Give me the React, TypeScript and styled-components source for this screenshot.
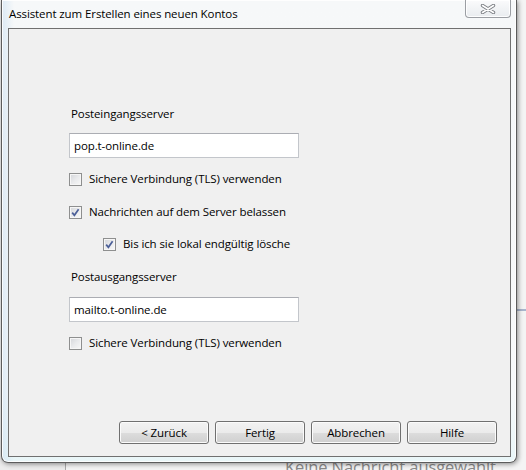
import React from "react";
import styled, { createGlobalStyle } from "styled-components";

const Global = createGlobalStyle`
  html, body { margin: 0; padding: 0; background: #f3f3f3; }
  body { font-family: "Open Sans", "Noto Sans", sans-serif; }
`;

const Desktop = styled.div`
  position: relative;
  width: 526px;
  height: 470px;
  overflow: hidden;
  background: #f4f4f4;
`;

const BackPaneLeft = styled.div`
  position: absolute;
  left: 0;
  top: 440px;
  width: 65px;
  height: 30px;
  background: #ececec;
  border-right: 1px solid #a9a9a9;
`;

const BackLine = styled.div`
  position: absolute;
  left: 510px;
  top: 309px;
  width: 16px;
  height: 2px;
  background: #a9b5cd;
`;

const BackText = styled.div`
  position: absolute;
  left: 285px;
  top: 459px;
  font-size: 16.5px;
  line-height: 16.5px;
  color: #8a8a8a;
  white-space: nowrap;
  letter-spacing: -0.1px;
`;

const Window = styled.div`
  position: relative;
  z-index: 1;
  margin-left: 1px;
  width: 516px;
  height: 463px;
  box-sizing: border-box;
  display: flex;
  flex-direction: column;
  border: 1px solid #5c5c5c;
  border-top: none;
  border-radius: 0 0 7px 7px;
  background:
    linear-gradient(90deg, rgba(200, 222, 240, 0.55) 0px, rgba(255, 255, 255, 0) 12px),
    linear-gradient(180deg, #f6f8f9 0%, #f7f9fa 85%, #e9f6f8 100%);
  box-shadow: inset 0 0 0 1px rgba(255, 255, 255, 0.85), 1px 1px 5px rgba(0, 0, 0, 0.45);
`;

const TitleBar = styled.div`
  height: 28px;
  flex: none;
  display: flex;
  align-items: flex-start;
  padding: 0 5px 0 7px;
`;

const Title = styled.div`
  font-size: 11.5px;
  line-height: 15px;
  letter-spacing: -0.1px;
  color: #000;
  margin-top: 6px;
  white-space: nowrap;
`;

const CloseButton = styled.div`
  margin-left: auto;
  width: 46px;
  height: 18px;
  box-sizing: border-box;
  border: 1px solid #9b9ea3;
  border-top: none;
  border-radius: 0 0 4px 4px;
  background: linear-gradient(180deg, #fbfbfc 0%, #f1f3f5 55%, #e9ecef 100%);
  box-shadow: inset 0 0 0 1px rgba(255, 255, 255, 0.9);
  display: flex;
  align-items: center;
  justify-content: center;
`;

const Panel = styled.div`
  flex: 1;
  margin: 0 5px 5px 6px;
  border: 1px solid #707070;
  background: #f0f0f0;
  display: flex;
  flex-direction: column;
  font-size: 11.5px;
  letter-spacing: -0.1px;
  color: #000;
`;

const Form = styled.div`
  display: flex;
  flex-direction: column;
  align-items: flex-start;
  padding: 77px 0 0 60px;
`;

const Label = styled.div<{ $mt: number }>`
  margin: ${(p) => p.$mt}px 0 0 2px;
  line-height: 15px;
  white-space: nowrap;
`;

const TextBox = styled.div<{ $mt: number }>`
  margin-top: ${(p) => p.$mt}px;
  width: 230px;
  height: 25px;
  box-sizing: border-box;
  border: 1px solid #c3c6cb;
  border-top-color: #abadb3;
  background: #fff;
  display: flex;
  align-items: center;
  padding-left: 4px;
  line-height: 15px;
  white-space: nowrap;
`;

const Row = styled.div<{ $mt: number; $indent?: number }>`
  margin-top: ${(p) => p.$mt}px;
  margin-left: ${(p) => p.$indent ?? 0}px;
  display: flex;
  align-items: flex-start;
`;

const Box = styled.span`
  width: 13px;
  height: 13px;
  box-sizing: border-box;
  flex: none;
  border: 1px solid #8e8f8f;
  background: linear-gradient(135deg, #d3d5d9 0%, #e9eaec 50%, #f8f8f8 100%);
  box-shadow: inset 0 0 0 1px #f6f6f6;
  display: flex;
  align-items: center;
  justify-content: center;
`;

const RowText = styled.span`
  margin: -2px 0 0 7px;
  line-height: 15px;
  white-space: nowrap;
`;

const ButtonBar = styled.div`
  margin-top: auto;
  display: flex;
  justify-content: flex-end;
  gap: 6px;
  padding: 0 13px 12px 0;
`;

const Button = styled.div`
  width: 90px;
  height: 23px;
  box-sizing: border-box;
  border: 1px solid #707070;
  border-radius: 3px;
  background: linear-gradient(180deg, #f2f2f2 0%, #ebebeb 50%, #dddddd 51%, #cfcfcf 100%);
  box-shadow: inset 0 0 0 1px #fbfbfb;
  display: flex;
  align-items: center;
  justify-content: center;
  line-height: 15px;
  white-space: nowrap;
`;

const CheckMark = () => (
  <svg width="11" height="11" viewBox="0 0 11 11">
    <path d="M2.2 5.6 L4.4 8.3 L8.6 2.2" fill="none" stroke="#4b5f98" strokeWidth="1.7" />
  </svg>
);

const CloseGlyph = () => (
  <svg width="16" height="10" viewBox="0 0 16 10">
    <path d="M2.5 1.5 L13.5 8.5 M13.5 1.5 L2.5 8.5" stroke="#7b7e83" strokeWidth="3.4" strokeLinecap="round" />
    <path d="M2.5 1.5 L13.5 8.5 M13.5 1.5 L2.5 8.5" stroke="#ffffff" strokeWidth="1.6" strokeLinecap="round" />
  </svg>
);

const Check: React.FC<{ checked?: boolean; label: string; mt: number; indent?: number }> = ({
  checked,
  label,
  mt,
  indent,
}) => (
  <Row $mt={mt} $indent={indent}>
    <Box>{checked && <CheckMark />}</Box>
    <RowText>{label}</RowText>
  </Row>
);

export default function App() {
  return (
    <>
      <Global />
      <Desktop>
        <BackPaneLeft />
        <BackLine />
        <BackText>Keine Nachricht ausgewählt</BackText>
        <Window>
          <TitleBar>
            <Title>Assistent zum Erstellen eines neuen Kontos</Title>
            <CloseButton>
              <CloseGlyph />
            </CloseButton>
          </TitleBar>
          <Panel>
            <Form>
              <Label $mt={0}>Posteingangsserver</Label>
              <TextBox $mt={12}>pop.t-online.de</TextBox>
              <Check mt={15} label="Sichere Verbindung (TLS) verwenden" />
              <Check mt={20} checked label="Nachrichten auf dem Server belassen" />
              <Check mt={19} indent={34} checked label="Bis ich sie lokal endgültig lösche" />
              <Label $mt={18}>Postausgangsserver</Label>
              <TextBox $mt={13}>mailto.t-online.de</TextBox>
              <Check mt={15} label="Sichere Verbindung (TLS) verwenden" />
            </Form>
            <ButtonBar>
              <Button>&lt; Zurück</Button>
              <Button>Fertig</Button>
              <Button>Abbrechen</Button>
              <Button>Hilfe</Button>
            </ButtonBar>
          </Panel>
        </Window>
      </Desktop>
    </>
  );
}
